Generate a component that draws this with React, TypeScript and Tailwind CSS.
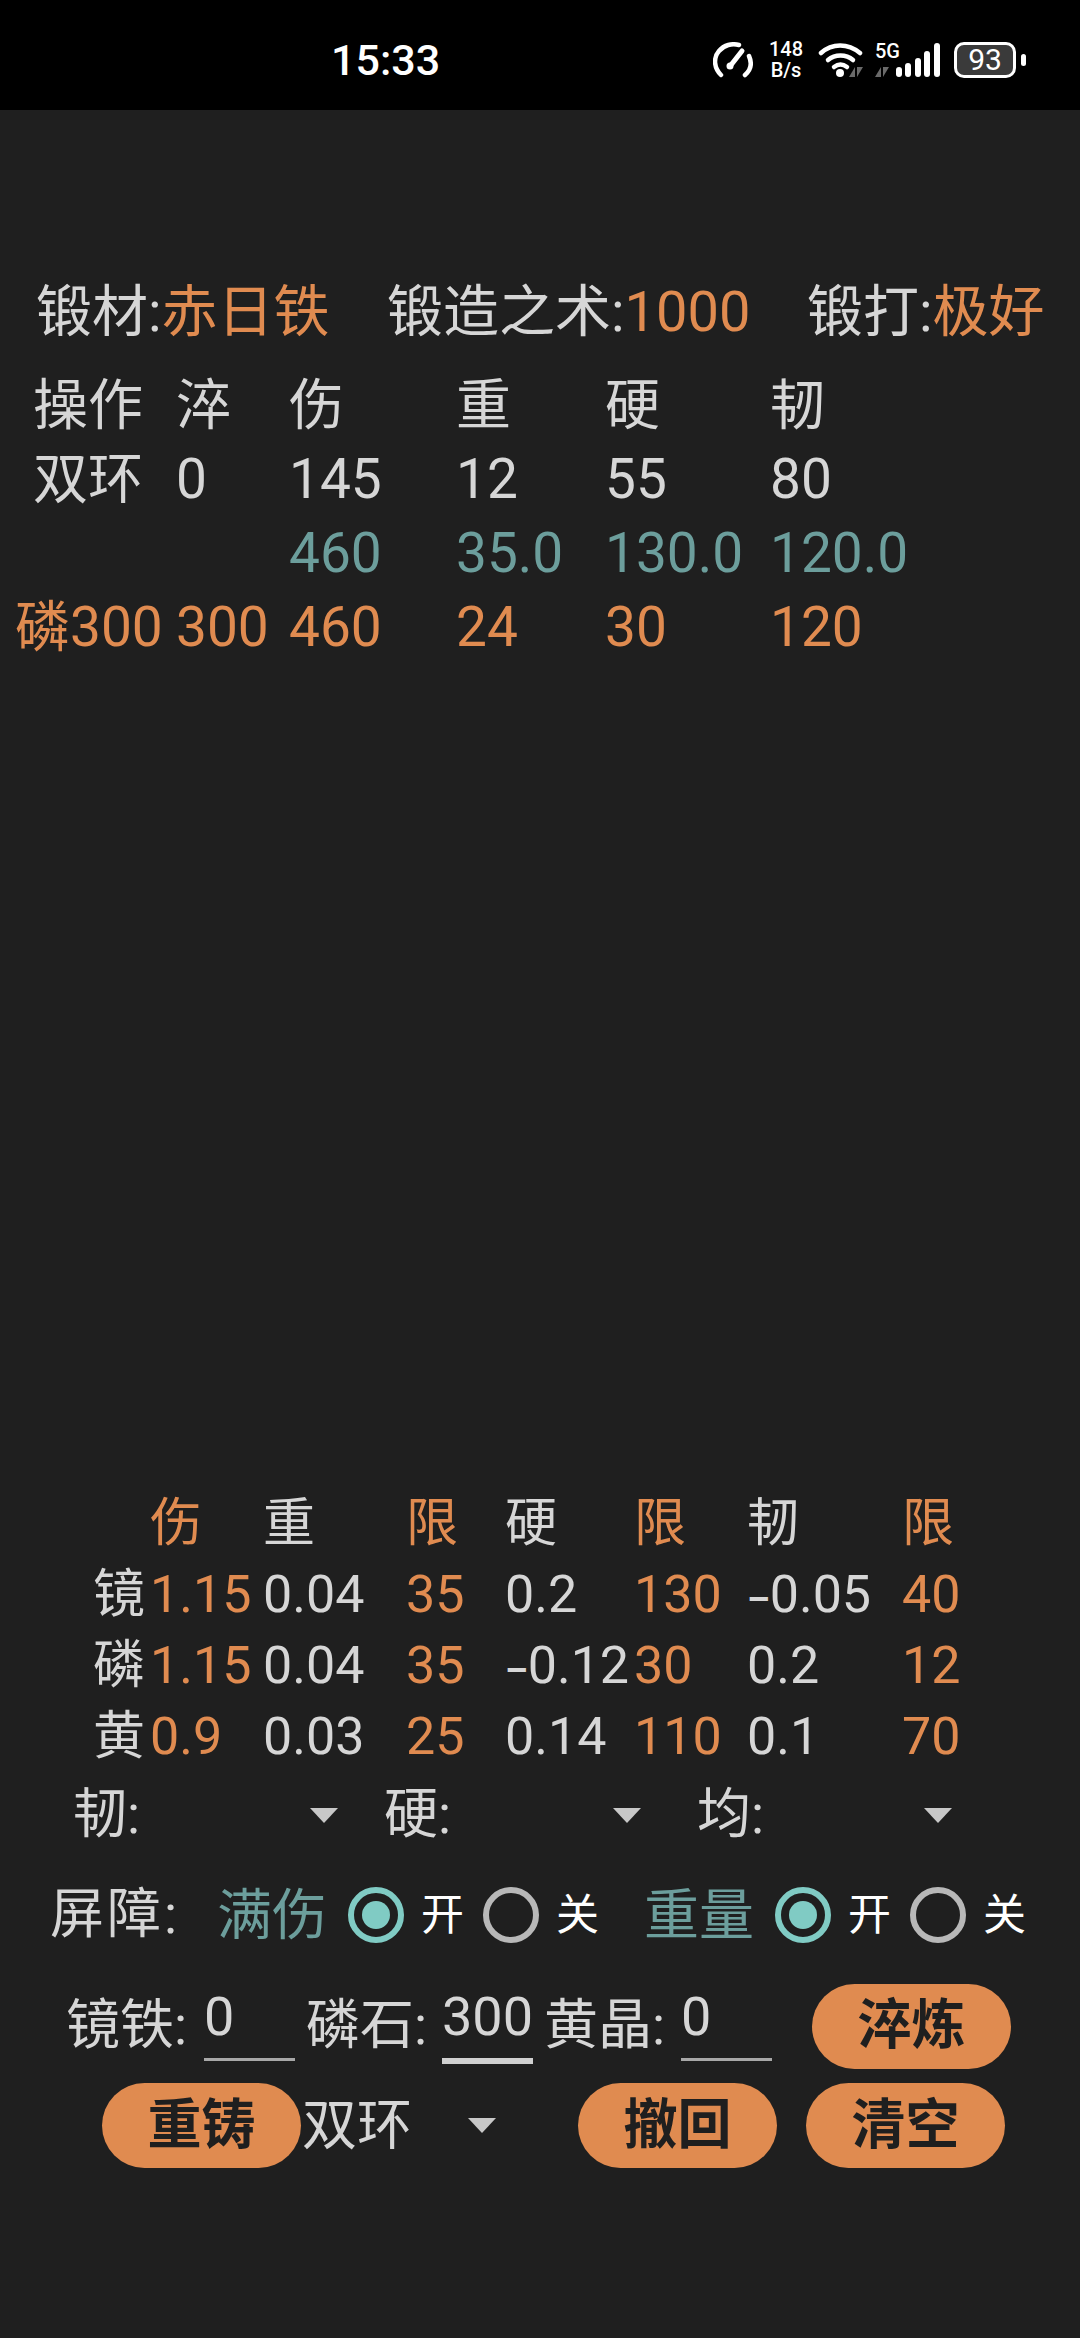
const orange = "text-[#e08b50]";
const teal = "text-[#6c9e9c]";

function Triangle() {
  return <span className="block h-0 w-0 border-x-[14px] border-t-[15px] border-x-transparent border-t-[#c8c8c8]" />;
}

function Radio({ on }: { on: boolean }) {
  return (
    <span
      className={`flex h-[56px] w-[56px] items-center justify-center rounded-full border-[6px] ${
        on ? "border-[#80cbc4]" : "border-[#b8b8b8]"
      }`}
    >
      {on && <span className="h-[28px] w-[28px] rounded-full bg-[#80cbc4]" />}
    </span>
  );
}

function PillButton({ label, className }: { label: string; className?: string }) {
  return (
    <button
      type="button"
      className={`flex h-[85px] w-[199px] shrink-0 items-center justify-center rounded-[43px] bg-[#e08b50] text-[54px] font-bold leading-none text-[#1f1f1f] ${className ?? ""}`}
    >
      {label}
    </button>
  );
}

function NumberInput({ value, focused }: { value: string; focused?: boolean }) {
  return (
    <div
      className={`mt-[2px] w-[91px] shrink-0 self-start pt-[4px] text-[54px] leading-[56px] ${
        focused ? "h-[79px] border-b-[6px] border-[#d0d0d0]" : "h-[76px] border-b-[3px] border-[#a8a8a8]"
      }`}
    >
      {value}
    </div>
  );
}

// the two small up/down arrows beside the wifi and 5G icons
function DataArrows({ className }: { className?: string }) {
  return (
    <svg width="14" height="10" viewBox="0 0 14 10" fill="#6a6a6a" className={className}>
      <path d="M6 0 V10 H0 Z" />
      <path d="M8 0 L14 0 L8 10 Z" />
    </svg>
  );
}

function StatusBar() {
  return (
    <div className="flex h-[110px] items-center bg-black pt-[10px] text-white">
      <div className="ml-[331px] w-[382px] text-[43px] font-medium leading-none">15:33</div>
      <svg width="40" height="36" viewBox="0 0 40 36" fill="none" stroke="white" strokeWidth="4.5" strokeLinecap="round">
        <path d="M8 33 C1 26 0 16 6 9 C11 3 19 1 26 3" />
        <path d="M36 14 C39 21 38 28 32 33" />
        <path d="M18 23 L29 9" strokeWidth="5" />
        <circle cx="17" cy="24" r="3.5" fill="white" stroke="none" />
      </svg>
      <div className="ml-[14px] flex w-[38px] flex-col items-center text-[20px] font-medium leading-[21px]">
        <span>148</span>
        <span>B/s</span>
      </div>
      <div className="relative ml-[13px] h-[36px] w-[46px]">
        <svg width="46" height="36" viewBox="0 0 46 36" fill="none" stroke="white" strokeWidth="4.5" strokeLinecap="round">
          <path d="M3 11 C14 1 30 1 42 11" />
          <path d="M10 18 C17 12 28 12 35 18" />
          <path d="M16 25 C20 22 25 22 29 25" />
          <circle cx="22" cy="31" r="4" fill="white" stroke="none" />
        </svg>
        <DataArrows className="absolute bottom-[1px] right-[1px]" />
      </div>
      <div className="ml-[11px] flex h-[36px] flex-col justify-between">
        <span className="text-[20px] font-medium leading-[18px]">5G</span>
        <DataArrows className="mb-[1px]" />
      </div>
      <svg width="44" height="34" viewBox="0 0 44 34" fill="white" className="ml-[-4px]">
        <rect x="0" y="24" width="6" height="10" rx="3" />
        <rect x="9" y="20" width="6" height="14" rx="3" />
        <rect x="19" y="15" width="6" height="19" rx="3" />
        <rect x="28" y="8" width="6" height="26" rx="3" />
        <rect x="38" y="0" width="6" height="34" rx="3" />
      </svg>
      <div className="ml-[14px] flex items-center">
        <div className="flex h-[36px] w-[62px] items-center justify-center rounded-[10px] border-[3px] border-white bg-[#3a3a3a] text-[30px] leading-none">
          93
        </div>
        <span className="ml-[5px] h-[12px] w-[5px] rounded-full bg-white" />
      </div>
    </div>
  );
}

const forgeRows = [
  { color: "", cells: ["操作", "淬", "伤", "重", "硬", "韧"] },
  { color: "", cells: ["双环", "0", "145", "12", "55", "80"] },
  { color: teal, cells: ["", "", "460", "35.0", "130.0", "120.0"] },
  { color: orange, cells: ["磷300", "300", "460", "24", "30", "120"] },
];

const limitRows = [
  ["", "伤", "重", "限", "硬", "限", "韧", "限"],
  ["镜", "1.15", "0.04", "35", "0.2", "130", "-0.05", "40"],
  ["磷", "1.15", "0.04", "35", "-0.12", "30", "0.2", "12"],
  ["黄", "0.9", "0.03", "25", "0.14", "110", "0.1", "70"],
];

// the reference font has a wider minus than Roboto's hyphen
function LimitCell({ value }: { value: string }) {
  if (!value.startsWith("-")) return <>{value}</>;
  return (
    <>
      <span className="text-[36px] font-bold">–</span>
      {value.slice(1)}
    </>
  );
}

export default function App() {
  return (
    <div
      className="flex h-[2338px] w-[1080px] flex-col overflow-hidden bg-[#1f1f1f] text-[#d6d6d6]"
      style={{ fontFamily: 'Roboto, "Noto Sans CJK SC", sans-serif' }}
    >
      <StatusBar />

      <div className="mt-[165px] flex h-[74px] items-center whitespace-nowrap pl-[36px] text-[56px] leading-none">
        <span className="w-[351px]">
          锻材:<span className={orange}>赤日铁</span>
        </span>
        <span className="w-[420px]">
          锻造之术:<span className={orange}>1000</span>
        </span>
        <span>
          锻打:<span className={orange}>极好</span>
        </span>
      </div>

      <div className="mt-[19px] pl-[15px] text-[55px] leading-none">
        {forgeRows.map((row, i) => (
          <div key={i} className={`grid h-[74px] grid-cols-[161px_113px_167px_149px_165px_1fr] items-center whitespace-nowrap ${row.color}`}>
            {row.cells.map((cell, j) => (
              <span key={j} className={j === 0 ? "w-[146px] text-center" : ""}>
                {cell}
              </span>
            ))}
          </div>
        ))}
      </div>

      <div className="mt-[824px] pl-[93px] text-[52px] leading-none">
        {limitRows.map((row, i) => (
          <div key={i} className="grid h-[71px] grid-cols-[57px_113px_143px_99px_129px_113px_155px_1fr] items-center whitespace-nowrap">
            {row.map((cell, j) => (
              <span key={j} className={j === 1 || j === 3 || j === 5 || j === 7 ? orange : ""}>
                <LimitCell value={cell} />
              </span>
            ))}
          </div>
        ))}
      </div>

      <div className="mt-[8px] flex h-[70px] items-center pl-[73px] text-[54px] leading-none">
        <span className="w-[237px]">韧:</span>
        <Triangle />
        <span className="ml-[46px] w-[229px]">硬:</span>
        <Triangle />
        <span className="ml-[56px] w-[227px]">均:</span>
        <Triangle />
      </div>

      <div className="mt-[35px] flex h-[60px] items-center pl-[50px] leading-none">
        <span className="w-[167px] text-[54px] tracking-[3px]">屏障:</span>
        <span className={`w-[131px] text-[55px] ${teal}`}>满伤</span>
        <Radio on />
        <span className="ml-[17px] w-[62px] text-[43px] text-white">开</span>
        <Radio on={false} />
        <span className="ml-[17px] w-[88px] text-[43px] text-white">关</span>
        <span className={`w-[131px] text-[55px] ${teal}`}>重量</span>
        <Radio on />
        <span className="ml-[17px] w-[62px] text-[43px] text-white">开</span>
        <Radio on={false} />
        <span className="ml-[17px] text-[43px] text-white">关</span>
      </div>

      <div className="mt-[38px] flex h-[86px] items-center pl-[66px] text-[54px] leading-none">
        <span className="w-[138px]">镜铁:</span>
        <NumberInput value="0" />
        <span className="ml-[11px] w-[136px]">磷石:</span>
        <NumberInput value="300" focused />
        <span className="ml-[11px] w-[137px]">黄晶:</span>
        <NumberInput value="0" />
        <PillButton label="淬炼" className="ml-[40px]" />
      </div>

      <div className="mt-[14px] flex h-[85px] items-center pl-[102px] text-[54px] leading-none">
        <PillButton label="重铸" />
        <span className="ml-[1px] w-[166px] text-[55px]">双环</span>
        <Triangle />
        <PillButton label="撤回" className="ml-[82px]" />
        <PillButton label="清空" className="ml-[29px]" />
      </div>
    </div>
  );
}
